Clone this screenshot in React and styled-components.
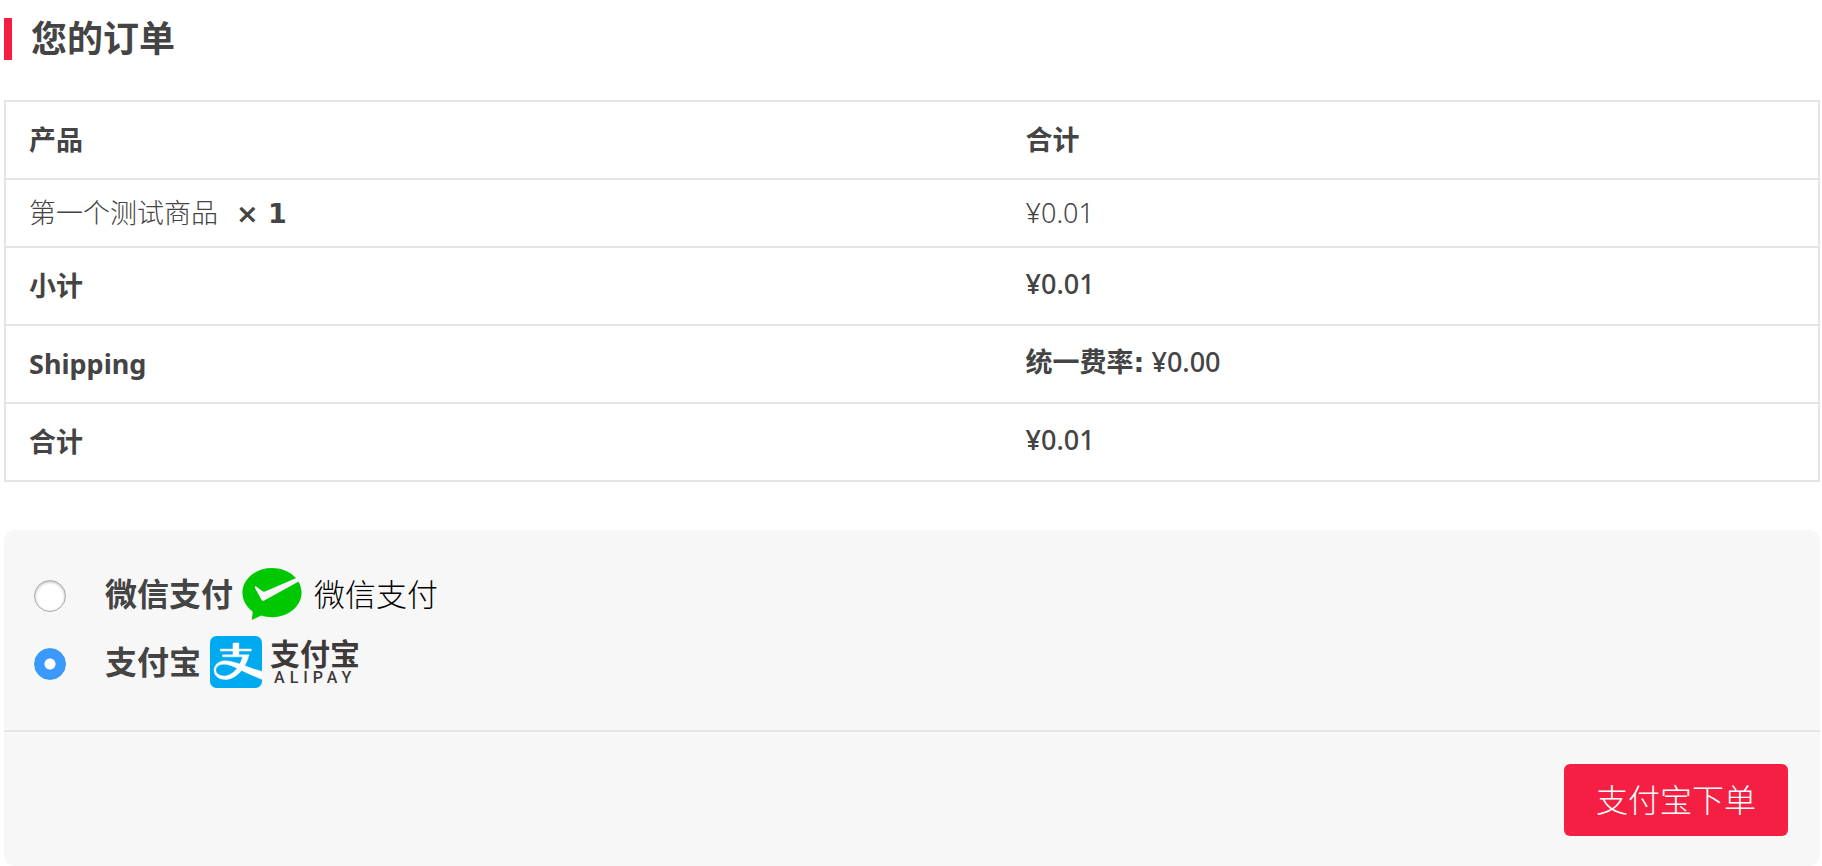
import { useState } from 'react'
import styled, { createGlobalStyle } from 'styled-components'

const items = [{ name: '第一个测试商品', quantity: 1, total: '¥0.01' }]

const totals = [
  { label: '小计', value: '¥0.01' },
  { label: 'Shipping', rate: '统一费率:', value: '¥0.00' },
  { label: '合计', value: '¥0.01' },
]

const methods = [
  { id: 'wechat', title: '微信支付', Logo: WechatPayLogo },
  { id: 'alipay', title: '支付宝', Logo: AlipayLogo },
]

export default function App() {
  const [method, setMethod] = useState('alipay')
  const { title } = methods.find(({ id }) => id === method)

  return (
    <>
      <GlobalStyle />
      <Checkout onSubmit={(e) => e.preventDefault()}>
        <Heading>您的订单</Heading>

        <OrderTable>
          <thead>
            <tr>
              <HeadCell scope="col" $first>
                产品
              </HeadCell>
              <HeadCell scope="col">合计</HeadCell>
            </tr>
          </thead>
          <tbody>
            {items.map(({ name, quantity, total }) => (
              <tr key={name}>
                <Cell>
                  {name}
                  <Quantity>× {quantity}</Quantity>
                </Cell>
                <Cell>{total}</Cell>
              </tr>
            ))}
          </tbody>
          <tfoot>
            {totals.map(({ label, rate, value }) => (
              <tr key={label}>
                <HeadCell scope="row">{label}</HeadCell>
                <TotalCell>
                  {rate && <Rate>{rate}</Rate>} {value}
                </TotalCell>
              </tr>
            ))}
          </tfoot>
        </OrderTable>

        <Payment>
          <Methods>
            {methods.map(({ id, title, Logo }) => (
              <Method key={id}>
                <Radio
                  type="radio"
                  id={id}
                  name="payment_method"
                  value={id}
                  checked={method === id}
                  onChange={() => setMethod(id)}
                />
                <MethodLabel htmlFor={id}>
                  {title}
                  <Logo />
                </MethodLabel>
              </Method>
            ))}
          </Methods>
          <Actions>
            <SubmitButton type="submit">{title}下单</SubmitButton>
          </Actions>
        </Payment>
      </Checkout>
    </>
  )
}

function WechatPayLogo() {
  return (
    <Brand $gap="12px">
      <svg width="60" height="52" viewBox="0 0 60 52" aria-hidden="true">
        <path
          fill="#00c800"
          d="M30 0C46.400 0 59.600 11 59.600 24.600S46.400 49.300 30 49.300c-3.800 0-7.500-.6-10.800-1.700L9.700 52l1.100-8.300C4.400 39.200.4 32.300.4 24.600.4 11 13.600 0 30 0Z"
        />
        <path
          fill="#f7f7f7"
          d="M12.900 19.800c-.4-1.200.6-1.900 1.700-1.100l5.600 4.300c1 .8 2.200.9 3.400.3L54.800 9.800l2.400 3.400L22.300 32.500c-1.300.8-2.400.4-3-.9Z"
        />
      </svg>
      <WechatName>微信支付</WechatName>
    </Brand>
  )
}

function AlipayLogo() {
  return (
    <Brand $gap="8px">
      <svg width="52" height="52" viewBox="0 0 24 24" aria-hidden="true">
        <rect width="24" height="24" rx="3" fill="#00aaf0" />
        <path
          fill="#fff"
          stroke="#fff"
          strokeWidth="0.2"
          d="M24 16.300s-.8-.1-4.300-1.230c-.95-.32-2.230-.81-3.650-1.330a19.450 19.450 0 0 0 1.980-5.060h-4.690V6.970h5.740v-.95h-5.740V3.180h-2.350c-.41 0-.41.41-.41.41v2.430H4.770v.95h5.810v1.710h-4.800v.95h9.300a16.800 16.800 0 0 1-1.340 3.300c-3.020-1-6.240-1.820-8.270-1.320-1.290.33-2.120.9-2.610 1.500-2.250 2.760-.64 6.950 4.110 6.950 2.810 0 5.510-1.580 7.610-4.180 3.120 1.520 9.420 4.170 9.420 4.170ZM6.530 18.460c-3.700 0-4.800-2.940-2.970-4.550.61-.54 1.730-.81 2.320-.87 2.200-.22 4.240.63 6.640 1.810-1.690 2.220-3.840 3.610-5.990 3.610Z"
        />
      </svg>
      <AlipayWordmark>
        <AlipayName>支付宝</AlipayName>
        <AlipayLatin>ALIPAY</AlipayLatin>
      </AlipayWordmark>
    </Brand>
  )
}

const GlobalStyle = createGlobalStyle`
  *,
  *::before,
  *::after {
    box-sizing: border-box;
  }

  body {
    margin: 0;
    background: #fff;
    color: #444;
    font-family: 'Noto Sans', 'Noto Sans CJK SC', sans-serif;
    font-size: 27px;
    font-weight: 300;
  }
`

const Checkout = styled.form`
  padding: 18px 2px 0 4px;
`

const Heading = styled.h3`
  margin: 0 0 40px;
  padding-left: 19px;
  border-left: 8px solid #f41f42;
  font-size: 36px;
  font-weight: 600;
  line-height: 42px;
`

const OrderTable = styled.table`
  width: 100%;
  margin-bottom: 48px;
  border: 2px solid #e5e5e5;
  border-spacing: 0;
  text-align: left;

  tbody > tr > *,
  tfoot > tr > * {
    border-top: 2px solid #e5e5e5;
  }
`

const Cell = styled.td`
  padding: 12px 23px;
  line-height: 42px;
`

const HeadCell = styled.th`
  width: ${(props) => (props.$first ? '55%' : 'auto')};
  padding: 17px 23px;
  font-weight: 700;
  line-height: 42px;
`

const TotalCell = styled.td`
  padding: 15px 23px 19px;
  font-weight: 500;
  line-height: 42px;
`

const Rate = styled.span`
  font-family: 'DejaVu Sans', 'Noto Sans CJK SC', sans-serif;
  font-weight: 700;
  line-height: 1;
`

const Quantity = styled.strong`
  margin-left: 18px;
  font-family: 'DejaVu Sans', sans-serif;
  font-size: 27px;
  font-weight: 700;
  line-height: 1;
`

const Payment = styled.section`
  border-radius: 10px;
  background: #f7f7f7;
`

const Methods = styled.ul`
  margin: 0;
  padding: 32px 30px;
  border-bottom: 2px solid #e5e5e5;
  list-style: none;
`

const Method = styled.li`
  display: flex;
  align-items: center;
  height: 68px;
`

const Radio = styled.input`
  appearance: none;
  width: 32px;
  height: 32px;
  margin: 0 39px 0 0;
  border: 1px solid #a9a9a9;
  border-radius: 50%;
  background: #fff;
  box-shadow: inset 0 1px 3px rgba(0, 0, 0, 0.3);
  cursor: pointer;

  &:checked {
    border-color: #3b99fc;
    background: radial-gradient(circle, #fff 5px, #3b99fc 6px);
    box-shadow: none;
  }
`

const MethodLabel = styled.label`
  display: flex;
  align-items: center;
  gap: 9px;
  padding-bottom: 4px;
  font-size: 32px;
  font-weight: 600;
  line-height: 52px;
  cursor: pointer;
`

const Brand = styled.span`
  display: flex;
  align-items: center;
  gap: ${(props) => props.$gap};
`

const WechatName = styled.span`
  color: #000;
  font-size: 31px;
  font-weight: 300;
`

const AlipayWordmark = styled.span`
  display: flex;
  flex-direction: column;
  color: #3e3a39;
`

const AlipayName = styled.span`
  font-family: 'Noto Sans CJK SC', sans-serif;
  font-size: 30px;
  font-weight: 700;
  line-height: 32px;
`

const AlipayLatin = styled.span`
  padding-left: 4px;
  font-family: Roboto, sans-serif;
  font-size: 16px;
  font-weight: 500;
  letter-spacing: 5px;
  line-height: 20px;
`

const Actions = styled.div`
  display: flex;
  justify-content: flex-end;
  padding: 32px 32px 30px;
`

const SubmitButton = styled.button`
  padding: 0 32px;
  border: 0;
  border-radius: 6px;
  background: #f41f42;
  color: #fff;
  font-family: inherit;
  font-size: 32px;
  font-weight: 300;
  line-height: 72px;
  cursor: pointer;
`
